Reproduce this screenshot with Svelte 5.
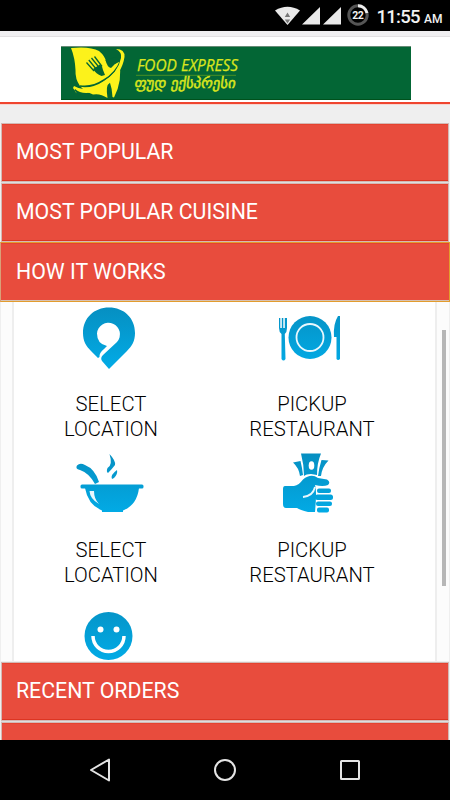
<script lang="ts">
  const topPanels = ['MOST POPULAR', 'MOST POPULAR CUISINE'];

  const steps = [
    { icon: 'pin', lines: ['SELECT', 'LOCATION'] },
    { icon: 'plate', lines: ['PICKUP', 'RESTAURANT'] },
    { icon: 'bowl', lines: ['SELECT', 'LOCATION'] },
    { icon: 'pay', lines: ['PICKUP', 'RESTAURANT'] },
    { icon: 'smile', lines: [] }
  ];
</script>

<div class="screen">
  <div class="status">
    <svg width="190" height="31" viewBox="260 0 190 31">
      <path d="M275 10.500Q287.500 3 300 10.500L287.500 25Z" fill="#e9e9e9" />
      <path d="M287.500 12.500l2.700 4.500h-5.400zM287.500 23.500l-2.700-4h5.400z" fill="#777" />
      <path d="M302 24.500L320 7V24.500ZM323 24.500L341 7V24.500Z" fill="#e9e9e9" />
      <circle cx="358" cy="15" r="9.200" fill="none" stroke="#555" stroke-width="3" />
      <path d="M358 5.800A9.200 9.200 0 0 1 367 13" fill="none" stroke="#eee" stroke-width="3" />
      <text x="352.300" y="19" font-size="10.500" font-weight="700" textLength="11.500">22</text>
      <text x="376.500" y="22.800" font-size="18.500" font-weight="500" textLength="44">11:55</text>
      <text x="424" y="22.800" font-size="12" font-weight="500" textLength="18.500">AM</text>
    </svg>
  </div>

  <header>
    <svg width="350" height="54" viewBox="61 46 350 54">
      <rect x="61" y="46" width="350" height="54" fill="#036635" />
      <path d="M61 46.500H411" stroke="#668b76" />
      <path d="M61 99.500H411" stroke="#00511c" />
      <path d="M71 48Q90 46 99 51Q105 56 106 61.500L115 64L119 62Q123 80 114 97.500L112.500 97Q112 88 109.500 81Q105.500 86 107.500 98Q100 93 93 94.500L85 91L80 86Q75 79 75.500 70Q75 58 71 48Z" fill="#fcf21b" />
      <path
        d="M105.500 60Q107 67 111 68L119 60L116 57Z"
        fill="#036635"
      />
      <path
        d="M121 60Q116 73 104 80Q92 88 80 86"
        fill="none"
        stroke="#036635"
        stroke-width="1.600"
      />
      <path
        d="M116 49Q125 49 124.500 57Q122 74 105 87Q85 98 75 89Q74 91 77 93.500L73 88L74 86Q87 94 103 82Q118 73 121 58Q122 52 116 49Z"
        fill="#fcf21b"
      />
      <path d="M86.500 62.500L94 71M88.800 60L97 70M91.500 58L100 68.500M94.500 56.500L102 66.500" stroke="#036635" stroke-width="1.300" />
      <path d="M93 69L100 64.500Q103 67 103 70L105 75L101.500 76Q96 74 93 69Z" fill="#036635" />
      <text class="brand" x="137" y="70.500" font-size="15.500" textLength="101" lengthAdjust="spacingAndGlyphs">FOOD EXPRESS</text>
      <path d="M136 75.300H236" stroke="#589a20" stroke-width=".8" />
      <text class="brand geo" transform="translate(134 88) skewX(-8)" font-size="14.500" textLength="101" lengthAdjust="spacingAndGlyphs">ფუდ ექსპრესი</text>
    </svg>
  </header>

  <main>
    {#each topPanels as title}
      <button class="panel-head">{title}</button>
    {/each}
    <button class="panel-head open">HOW IT WORKS</button>

    <section class="body">
      <div class="steps">
        {#each steps as step}
          <div class="step">
            <svg class={step.icon} width="72" height="70" viewBox="0 0 72 70" fill="url(#blue-{step.icon})">
              <defs>
                <linearGradient id="blue-{step.icon}" gradientUnits="userSpaceOnUse" x1="0" y1="5" x2="0" y2="64">
                  <stop offset="0" stop-color="#068fc1" />
                  <stop offset="1" stop-color="#02aae5" />
                </linearGradient>
              </defs>
              {#if step.icon === 'pin'}
                <path
                  d="M33 5.500C18 5.500 7 16 7 31C7 39 10 44 15 49L22 56L23.500 55Q23 51 28 47L31 44Q21 42 21 31.500A11.500 11.500 0 1 1 41 40L27 53Q24 56 26 59L33 67L51 49C56 44 59 39 59 31C59 16 48 5.500 33 5.500Z"
                />
              {:else if step.icon === 'plate'}
                <path d="M7 18h1.300v10h1.500V18h1.500v10h1.500V18H15v10q0 4-2.200 6L13.500 59q-2 3-4 0L9.500 34Q7 32 7 28Z" />
                <circle cx="38" cy="37.500" r="21.500" />
                <circle cx="38" cy="37.500" r="13.500" fill="none" stroke="#e9f7fd" stroke-width="1.800" />
                <path d="M66 16h2V59q-2 2-3.500 0V37H62Q61 24 66 16Z" />
              {:else if step.icon === 'bowl'}
                <rect x="4.500" y="36.500" width="63" height="4" rx="1.500" />
                <path d="M9 40H63Q61 57 47 62.500V64H26V62.500Q12 57 9 40Z" />
                <path d="M1 17.500Q4 14.500 9 17Q19 21 23 34L19 36Q13 25 4 22Q-1 21 1 17.500Z" />
                <path d="M33.500 6Q40 13 39 17Q36 21 32 25Q30 24 31.500 20Q37 17 33.500 6ZM41 22Q42 26 38 30L36 31Q34 27 41 22Z" />
                <path d="M13.500 43Q14 51 23 56Q18 51 18 43Z" fill="#e9f7fd" />
              {:else if step.icon === 'pay'}
                <path d="M29 5.500H49Q45 15 45 27L39 26Q34 26 32 28Q32 17 29 5.500Z" />
                <ellipse cx="39.500" cy="17.500" rx="2.800" ry="4.300" fill="#fff" />
                <path d="M21 14.500L28.500 13Q30 19 31 27L28 28Q27 20 21 14.500ZM49.500 12L56.500 12.500Q50 19 49 28H46Q47 20 49.500 12Z" />
                <path
                  d="M13 38H22Q27 37 31 31.500Q39 25 46 30L55 31.500Q59 34 56 37Q51 39 43 37Q45 43 43 64H36Q28 62 25 60H14Q11 60 11 56V41Q11 38 13 38Z"
                />
                <path d="M31 49Q41 48 43 39" fill="none" stroke="#e9f7fd" stroke-width="1.800" />
                <rect x="45" y="40.500" width="14" height="4.500" rx="2" />
                <rect x="43" y="46.500" width="18" height="5.500" rx="2.500" />
                <rect x="44" y="53.500" width="16" height="4.500" rx="2" />
                <rect x="45" y="59.500" width="12" height="5" rx="2" />
              {:else}
                <circle cx="32.500" cy="42" r="24" />
                <circle cx="24.500" cy="35.500" r="3" fill="#fff" />
                <circle cx="40.500" cy="35.500" r="3" fill="#fff" />
                <path d="M17 42A15.500 15.500 0 0 0 48 42" fill="none" stroke="#fff" stroke-width="3.500" />
              {/if}
            </svg>
            <p>
              {#each step.lines as line}
                <span>{line}</span>
              {/each}
            </p>
          </div>
        {/each}
      </div>
      <div class="track"><div class="thumb"></div></div>
    </section>

    <button class="panel-head">RECENT ORDERS</button>
    <button class="panel-head" aria-label="More"></button>
  </main>

  <nav>
    <svg width="450" height="60" viewBox="0 0 450 60" fill="none" stroke="#e4e4e4" stroke-width="2">
      <path d="M91 30L109 19.500V40.500Z" stroke-linejoin="round" />
      <circle cx="225" cy="30" r="10" />
      <rect x="341" y="21" width="18" height="18" rx=".5" />
    </svg>
  </nav>
</div>

<style>
  :global(body) {
    margin: 0;
    overflow: hidden;
  }

  .screen {
    width: 450px;
    height: 800px;
    display: flex;
    flex-direction: column;
    overflow: hidden;
    background: #efefef;
    font-family: Roboto, sans-serif;
  }

  .status {
    height: 31px;
    flex: none;
    background: #000;
    display: flex;
    justify-content: flex-end;
  }

  .status text {
    fill: #f2f2f2;
  }

  header {
    box-sizing: border-box;
    height: 73px;
    flex: none;
    padding: 10px 0 0 61px;
    background: #fff;
    border-top: 5px solid #f0eff1;
    border-bottom: 2px solid #ef452f;
    box-shadow: inset 0 1px #e2e0e2, 0 1px #f7d6d0;
  }

  header svg {
    display: block;
  }

  .brand {
    fill: #d9e51d;
    stroke: #d9e51d;
    stroke-width: 0.25px;
    font-family: "Open Sans", sans-serif;
    font-style: italic;
  }

  .geo {
    stroke-width: 0.5px;
    font-family: "DejaVu Sans", sans-serif;
    font-style: normal;
  }

  main {
    height: 636px;
    box-sizing: border-box;
    padding-top: 19px;
    overflow: hidden;
    display: flex;
    flex-direction: column;
  }

  .panel-head {
    box-sizing: border-box;
    flex: none;
    width: 448px;
    height: 59px;
    margin: 0 0 1px 1px;
    padding: 0 14px 2px;
    border: 1px solid #d3b9b5;
    border-radius: 0;
    background: #e84c3d;
    box-shadow: inset 0 1px #e5422f, inset 0 -1px #dc3522, 0 1px #dedede;
    color: #fff;
    font: 400 21.3px Roboto, sans-serif;
    text-align: left;
  }

  .panel-head.open {
    width: 450px;
    height: 60px;
    margin: -1px 0 0;
    padding-left: 15px;
    border-color: #e39c2d;
    border-left-color: #d9a078;
    box-shadow: inset 0 1px #e5422f, inset 0 -1px #d6c3b5;
  }

  .body {
    height: 359px;
    flex: none;
    box-sizing: border-box;
    padding-left: 11px;
    margin: 0 1px 1px;
    display: flex;
    overflow: hidden;
    background: #fcfcfc;
  }

  .steps {
    box-sizing: border-box;
    width: 425px;
    padding: 0 12px 0 0;
    display: grid;
    grid-template-columns: 201px 201px;
    grid-auto-rows: 146px;
    align-content: start;
    background: #fff;
    border: solid #eee;
    border-width: 0 2px;
  }

  .step {
    display: flex;
    flex-direction: column;
  }

  .step svg {
    flex: none;
    margin-left: 62px;
  }

  .step .plate {
    margin: -2px 0 2px 57px;
  }

  .step .pay {
    margin-left: 57px;
  }

  p {
    margin: 19.5px 0 0;
    padding-right: 7px;
    text-align: center;
    font-size: 20.3px;
    font-weight: 300;
    line-height: 25px;
    color: #000;
  }

  p span {
    display: block;
  }

  .track {
    padding: 28px 0 0 5px;
  }

  .thumb {
    width: 4px;
    height: 256px;
    background: #b7b7b7;
  }

  nav {
    height: 60px;
    flex: none;
    background: #000;
  }

  nav svg {
    display: block;
  }
</style>
